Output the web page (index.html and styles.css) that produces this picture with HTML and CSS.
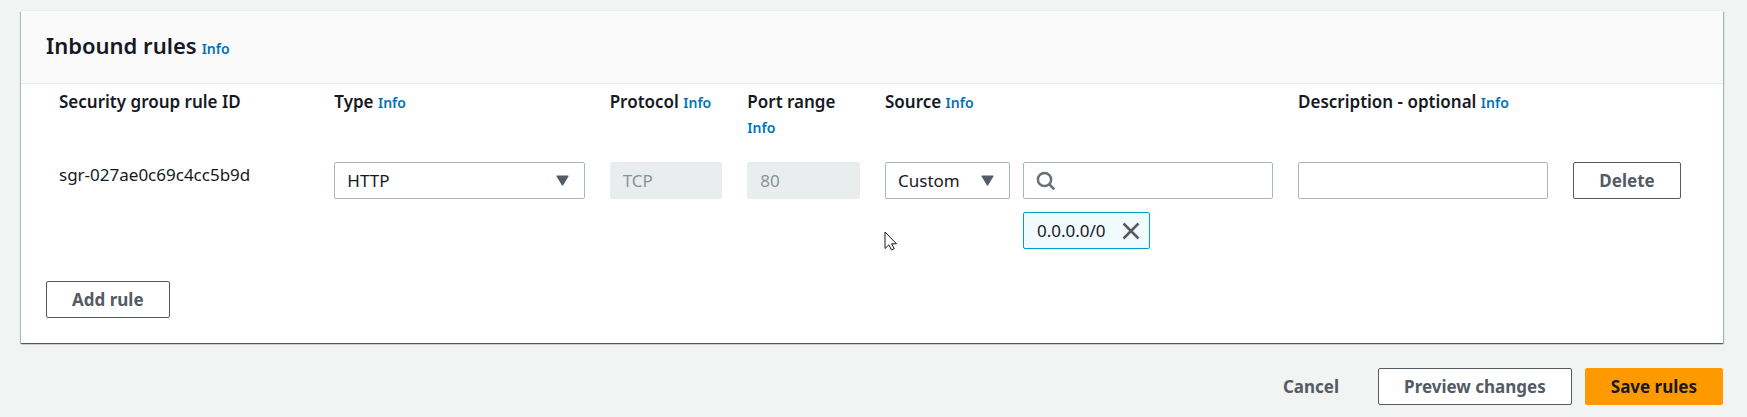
FILE: index.html
```html
<!DOCTYPE html>
<html lang="en">
<head>
<meta charset="utf-8">
<title>Inbound rules</title>
<link rel="stylesheet" href="styles.css">
</head>
<body>
<main class="page">
  <section class="panel">
    <header class="panel-header">
      <h2 class="title">Inbound rules</h2>
      <a class="info" href="#">Info</a>
    </header>
    <div class="panel-body">
      <div class="rules">
        <div class="head span-2">Security group rule ID</div>
        <div class="head span-2"><label for="type">Type</label> <a class="info" href="#">Info</a></div>
        <div class="head"><label for="protocol">Protocol</label> <a class="info" href="#">Info</a></div>
        <div class="head"><label for="port">Port range</label> <a class="info" href="#">Info</a></div>
        <div class="head span-3"><label for="source">Source</label> <a class="info" href="#">Info</a></div>
        <div class="head span-3"><label for="description">Description - optional</label> <a class="info" href="#">Info</a></div>

        <div class="rule-id span-2">sgr-027ae0c69c4cc5b9d</div>
        <div class="select span-2">
          <select class="control" id="type"><option>HTTP</option></select>
          <svg class="caret" viewBox="0 0 13 11"><path d="M1.2.5h10.6q1.2 0 .6 1L7.3 9.9q-.8 1-1.6 0L.6 1.500Q0 .5 1.200.5z"/></svg>
        </div>
        <div><input class="control" id="protocol" type="text" value="TCP" disabled></div>
        <div><input class="control" id="port" type="text" value="80" disabled></div>
        <div class="source span-3">
          <div class="select">
            <select class="control" id="source"><option>Custom</option></select>
            <svg class="caret" viewBox="0 0 13 11"><path d="M1.2.5h10.6q1.2 0 .6 1L7.3 9.9q-.8 1-1.6 0L.6 1.500Q0 .5 1.200.5z"/></svg>
          </div>
          <div class="source-values">
            <div class="search">
              <svg class="search-icon" viewBox="0 0 20 20"><circle cx="8.500" cy="8.500" r="6.600"/><path d="M13 13l5.300 5.300"/></svg>
              <input class="control search-input" type="search" aria-label="Search source">
            </div>
            <div class="token">
              <span>0.0.0.0/0</span>
              <button class="remove" type="button" aria-label="Remove 0.0.0.0/0">
                <svg class="cross" viewBox="0 0 18 18"><path d="M1.500 1.500l15 15M16.500 1.500l-15 15"/></svg>
              </button>
            </div>
          </div>
        </div>
        <div class="span-2"><input class="control" id="description" type="text"></div>
        <div><button class="button" type="button">Delete</button></div>
      </div>
      <button class="button" type="button">Add rule</button>
    </div>
  </section>
  <footer class="actions">
    <button class="button link" type="button">Cancel</button>
    <button class="button" type="button">Preview changes</button>
    <button class="button primary" type="button">Save rules</button>
  </footer>
</main>
<svg class="pointer" viewBox="0 0 14 20"><path d="M1 1v16.500l3.800-3.600 2.700 5 2.700-1.300-2.600-4.800h4.900z"/></svg>
</body>
</html>
```
FILE: styles.css
```css
* {
  box-sizing: border-box;
}

body {
  margin: 0;
  background: #f2f3f3;
  color: #16191f;
  font: 17px/25px "Noto Sans", "Open Sans", sans-serif;
}

.page {
  padding: 11px 24px 12px 21px;
}

.panel {
  background: #fff;
  box-shadow: 0 1px 1px 0 rgba(0, 28, 36, 0.5), 1px 1px 1px 0 rgba(0, 28, 36, 0.25), -1px 1px 1px 0 rgba(0, 28, 36, 0.2), 0 -1px 0 0 #eaeded;
}

.panel-header {
  display: flex;
  align-items: baseline;
  gap: 5px;
  padding: 18px 25px 22px;
  background: #fafafa;
  border-bottom: 1px solid #eaeded;
}

.title {
  margin: 0;
  font-size: 22px;
  line-height: 32px;
  font-weight: 600;
}

.info {
  color: #0073bb;
  font-size: 14px;
  font-weight: 600;
  text-decoration: none;
}

.panel-body {
  padding: 5px 25px 25px;
}

.rules {
  display: grid;
  grid-template-columns: repeat(12, minmax(0, 1fr));
  column-gap: 25px;
  row-gap: 22px;
  padding: 0 12px 32px 13px;
}

.head {
  font-weight: 600;
}

.span-2 {
  grid-column: span 2;
}

.span-3 {
  grid-column: span 3;
}

.control {
  display: block;
  width: 100%;
  height: 37px;
  margin: 0;
  padding: 0 12px;
  appearance: none;
  border: 1px solid #aab7b8;
  border-radius: 2px;
  background: #fff;
  color: inherit;
  font: inherit;
}

.control:disabled {
  border-color: #eaeded;
  background: #eaeded;
  color: #879596;
  opacity: 1;
}

.select {
  position: relative;
}

.caret {
  position: absolute;
  top: 13px;
  right: 16px;
  width: 13px;
  height: 11px;
  fill: #545b64;
  pointer-events: none;
}

.source {
  display: grid;
  grid-template-columns: 1fr 2fr;
  gap: 13px;
}

.source-values {
  display: grid;
  justify-items: start;
  gap: 13px;
}

.search {
  position: relative;
  width: 100%;
}

.search-icon {
  position: absolute;
  top: 9px;
  left: 13px;
  width: 20px;
  height: 20px;
  fill: none;
  stroke: #687078;
  stroke-width: 2.5;
}

.search-input {
  padding-left: 40px;
}

.token {
  display: flex;
  align-items: center;
  gap: 16px;
  height: 37px;
  padding: 0 9px 0 13px;
  border: 1px solid #00a1c9;
  border-radius: 2px;
  background: #f1faff;
}

.remove {
  display: flex;
  padding: 0;
  border: 0;
  background: none;
}

.cross {
  width: 18px;
  height: 18px;
  stroke: #545b64;
  stroke-width: 2.5;
}

.button {
  height: 37px;
  padding: 0 25px;
  border: 1px solid #545b64;
  border-radius: 2px;
  background: #fff;
  color: #545b64;
  font: inherit;
  font-weight: 700;
  white-space: nowrap;
}

.actions {
  display: flex;
  justify-content: flex-end;
  gap: 13px;
  padding-top: 25px;
}

.link {
  border-color: transparent;
  background: transparent;
}

.primary {
  border-color: #f90;
  background: #f90;
  color: #16191f;
}

.pointer {
  position: absolute;
  top: 231px;
  left: 884px;
  width: 14px;
  height: 20px;
  fill: #fff;
  stroke: #16191f;
  pointer-events: none;
}
```
